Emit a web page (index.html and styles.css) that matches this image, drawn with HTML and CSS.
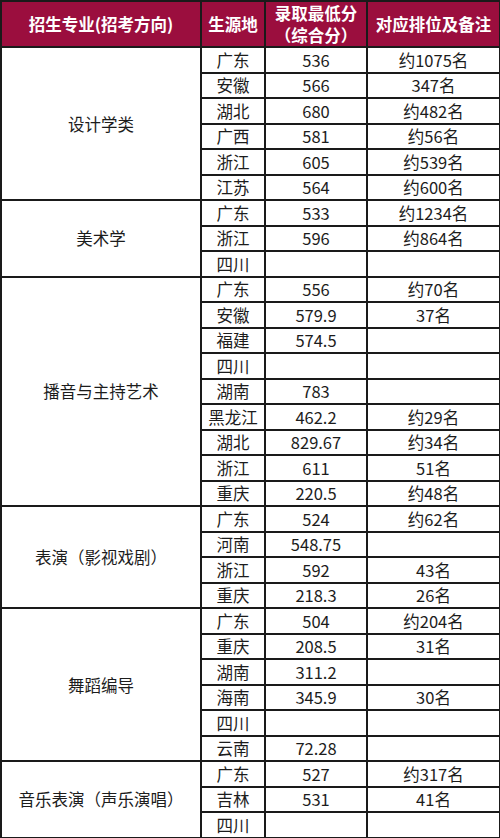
FILE: index.html
```html
<!DOCTYPE html>
<html lang="zh">
<head>
<meta charset="utf-8">
<link rel="stylesheet" href="styles.css">
</head>
<body>
<table class="score">
  <colgroup>
    <col class="c-major"><col class="c-prov"><col class="c-score"><col class="c-rank">
  </colgroup>
  <thead>
    <tr class="head">
      <th>招生专业(招考方向)</th>
      <th>生源地</th>
      <th><span class="hl">录取最低分</span><span class="hl">（综合分）</span></th>
      <th>对应排位及备注</th>
    </tr>
  </thead>
  <tbody>
    <tr><td class="major" rowspan="6">设计学类</td><td>广东</td><td>536</td><td>约1075名</td></tr>
    <tr><td>安徽</td><td>566</td><td>347名</td></tr>
    <tr><td>湖北</td><td>680</td><td>约482名</td></tr>
    <tr><td>广西</td><td>581</td><td>约56名</td></tr>
    <tr><td>浙江</td><td>605</td><td>约539名</td></tr>
    <tr><td>江苏</td><td>564</td><td>约600名</td></tr>

    <tr><td class="major" rowspan="3">美术学</td><td>广东</td><td>533</td><td>约1234名</td></tr>
    <tr><td>浙江</td><td>596</td><td>约864名</td></tr>
    <tr><td>四川</td><td></td><td></td></tr>

    <tr><td class="major" rowspan="9">播音与主持艺术</td><td>广东</td><td>556</td><td>约70名</td></tr>
    <tr><td>安徽</td><td>579.9</td><td>37名</td></tr>
    <tr><td>福建</td><td>574.5</td><td></td></tr>
    <tr><td>四川</td><td></td><td></td></tr>
    <tr><td>湖南</td><td>783</td><td></td></tr>
    <tr><td>黑龙江</td><td>462.2</td><td>约29名</td></tr>
    <tr><td>湖北</td><td>829.67</td><td>约34名</td></tr>
    <tr><td>浙江</td><td>611</td><td>51名</td></tr>
    <tr><td>重庆</td><td>220.5</td><td>约48名</td></tr>

    <tr><td class="major" rowspan="4">表演（影视戏剧）</td><td>广东</td><td>524</td><td>约62名</td></tr>
    <tr><td>河南</td><td>548.75</td><td></td></tr>
    <tr><td>浙江</td><td>592</td><td>43名</td></tr>
    <tr><td>重庆</td><td>218.3</td><td>26名</td></tr>

    <tr><td class="major" rowspan="6">舞蹈编导</td><td>广东</td><td>504</td><td>约204名</td></tr>
    <tr><td>重庆</td><td>208.5</td><td>31名</td></tr>
    <tr><td>湖南</td><td>311.2</td><td></td></tr>
    <tr><td>海南</td><td>345.9</td><td>30名</td></tr>
    <tr><td>四川</td><td></td><td></td></tr>
    <tr><td>云南</td><td>72.28</td><td></td></tr>

    <tr><td class="major" rowspan="3">音乐表演（声乐演唱）</td><td>广东</td><td>527</td><td>约317名</td></tr>
    <tr><td>吉林</td><td>531</td><td>41名</td></tr>
    <tr><td>四川</td><td></td><td></td></tr>
  </tbody>
</table>
</body>
</html>
```
FILE: styles.css
```css
html, body {
  margin: 0;
  padding: 0;
  background: #ffffff;
}

.score {
  border-collapse: collapse;
  table-layout: fixed;
  width: 499px;
  font-family: "Noto Sans CJK SC", "Noto Sans", sans-serif;
  font-size: 16.5px;
  color: #1c1c1c;
}

.c-major { width: 200px; }
.c-prov { width: 64px; }
.c-score { width: 102px; }
.c-rank { width: 133px; }

.score th,
.score td {
  border: 2px solid #1a1a1a;
  padding: 0;
  text-align: center;
  vertical-align: middle;
  line-height: 20px;
  white-space: nowrap;
}

.head th {
  background: #9b0e3e;
  color: #ffffff;
  font-weight: bold;
  height: 44px;
  line-height: 20px;
}

.hl {
  display: block;
  line-height: 22px;
}

.score tbody tr {
  height: 25.5px;
}

.score tbody td {
  height: 23.5px;
}

.major {
  font-size: 16.5px;
}
```
